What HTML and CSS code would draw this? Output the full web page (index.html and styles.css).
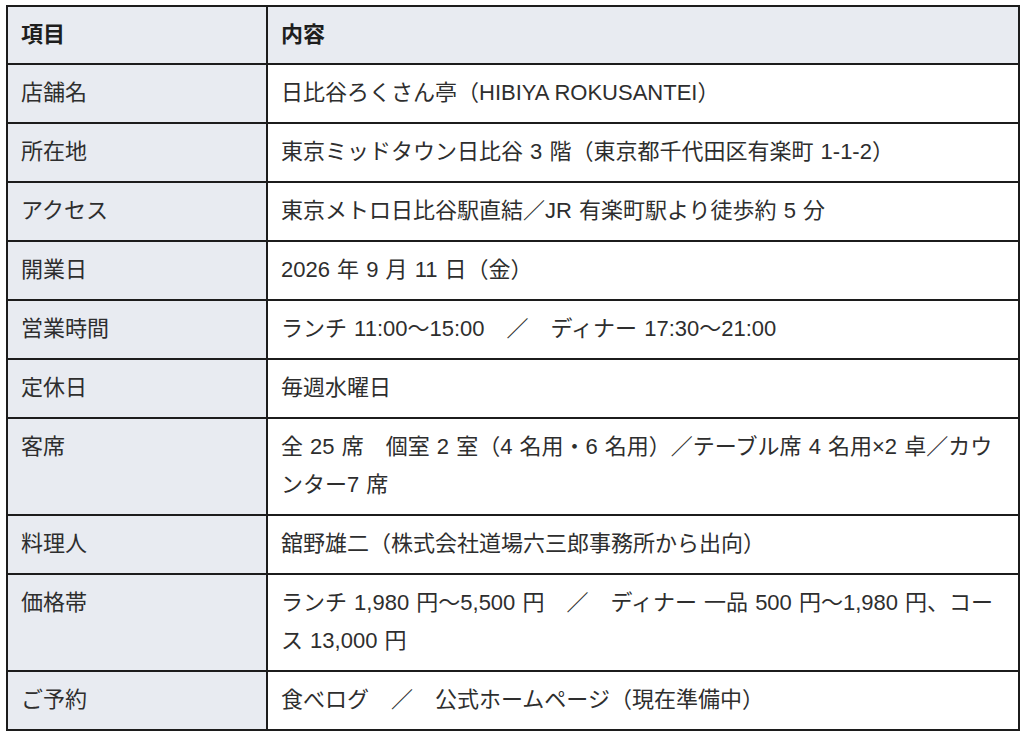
FILE: index.html
```html
<!DOCTYPE html>
<html lang="ja">
<head>
<meta charset="utf-8">
<title>日比谷ろくさん亭</title>
<link rel="stylesheet" href="styles.css">
</head>
<body>
<table class="info">
  <thead>
    <tr><th class="key">項目</th><th class="val">内容</th></tr>
  </thead>
  <tbody>
    <tr><td class="key">店舗名</td><td class="val">日比谷ろくさん亭（<span class="latin">HIBIYA ROKUSANTEI</span>）</td></tr>
    <tr><td class="key">所在地</td><td class="val">東京ミッドタウン日比谷 3 階（東京都千代田区有楽町 1-1-2）</td></tr>
    <tr><td class="key">アクセス</td><td class="val">東京メトロ日比谷駅直結／JR 有楽町駅より徒歩約 5 分</td></tr>
    <tr><td class="key">開業日</td><td class="val">2026 年 9 月 11 日（金）</td></tr>
    <tr><td class="key">営業時間</td><td class="val">ランチ 11:00〜15:00　／　ディナー 17:30〜21:00</td></tr>
    <tr><td class="key">定休日</td><td class="val">毎週水曜日</td></tr>
    <tr><td class="key">客席</td><td class="val">全 25 席　個室 2 室（4 名用・6 名用）／テーブル席 4 名用×2 卓／カウンター7 席</td></tr>
    <tr><td class="key">料理人</td><td class="val">舘野雄二（株式会社道場六三郎事務所から出向）</td></tr>
    <tr><td class="key">価格帯</td><td class="val">ランチ 1,980 円〜5,500 円　／　ディナー 一品 500 円〜1,980 円、コース 13,000 円</td></tr>
    <tr><td class="key">ご予約</td><td class="val">食べログ　／　公式ホームページ（現在準備中）</td></tr>
  </tbody>
</table>
</body>
</html>
```
FILE: styles.css
```css
html, body {
  margin: 0;
  padding: 0;
  background: #ffffff;
}
body {
  padding: 5px 4px 0 6px;
  font-family: "Liberation Sans", "Noto Sans CJK JP", sans-serif;
  color: #2e2e2e;
}
.info {
  width: 1014px;
  border-collapse: collapse;
  table-layout: fixed;
  border: 2px solid #1c1c1c;
  font-size: 22px;
  line-height: 38px;
}
.info th,
.info td {
  border: 2px solid #1c1c1c;
  padding: 9px 13px 10px 13px;
  text-align: left;
  vertical-align: top;
  word-spacing: 1px;
}
.info th {
  background: #e8ebf1;
  font-weight: 700;
  color: #1e1e1e;
  padding-top: 9px;
  padding-bottom: 9px;
}
.info .key {
  width: 232px;
  background: #e8ebf1;
}
.info td.val {
  background: #ffffff;
}
.latin {
  word-spacing: 0;
}
```
